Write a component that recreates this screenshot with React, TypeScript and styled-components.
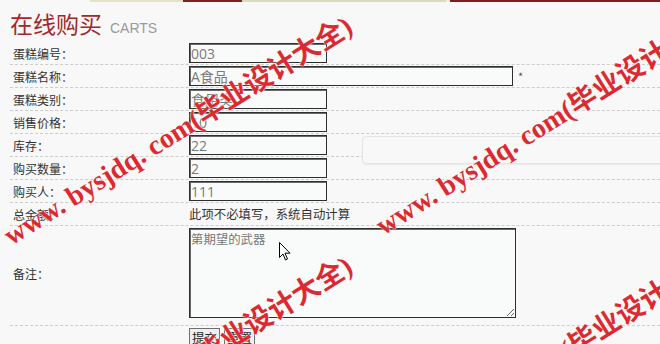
import styled, { createGlobalStyle } from 'styled-components';

const GlobalStyle = createGlobalStyle`
  html, body {
    margin: 0;
    padding: 0;
    background: #f8f8f8;
  }
  body {
    font-family: "Noto Sans CJK SC", "Noto Sans", sans-serif;
    color: #333;
  }
`;

const Page = styled.div`
  position: relative;
  width: 660px;
  height: 344px;
  overflow: hidden;
  background: #f8f8f8;
`;

const TopStrip = styled.div`
  height: 2px;
  background: linear-gradient(
    to right,
    transparent 0 90px,
    #e6e2c6 90px 183px,
    #7a2224 183px 242px,
    #dcdcb8 242px 446px,
    #f0eee0 446px 450px,
    #7a1f22 450px 660px
  );
`;

const Header = styled.div`
  display: flex;
  align-items: baseline;
  gap: 8px;
  padding: 7px 0 0 10px;
  height: 33px;
`;

const Title = styled.h1`
  margin: 0;
  font-size: 23px;
  font-weight: normal;
  color: #a3282b;
  line-height: 28px;
`;

const SubTitle = styled.span`
  font-family: "Liberation Sans", Arial, sans-serif;
  font-size: 14px;
  color: #9a9a9a;
`;

const Form = styled.form`
  margin: 0 0 0 10px;
`;

const Row = styled.div<{ $pad?: string; $last?: boolean }>`
  display: grid;
  grid-template-columns: 179px 1fr;
  align-items: center;
  padding: ${(p) => p.$pad || '1px 0'};
  min-height: 20px;
  border-bottom: ${(p) => (p.$last ? 'none' : '1px dashed #cdcdcd')};
`;

const Label = styled.label`
  padding-left: 3px;
  font-size: 12px;
  color: #333;
`;

const Field = styled.div`
  display: flex;
  align-items: center;
  gap: 5px;
`;

const Input = styled.input<{ $w: number }>`
  box-sizing: border-box;
  width: ${(p) => p.$w}px;
  height: 20px;
  margin: 0;
  padding: 0 1px;
  border: 1px solid #2e2e2e;
  box-shadow: inset 1px 1px 0 #6a6a6a;
  background: #f9fbfb;
  font-family: "Open Sans", "Noto Sans CJK SC", sans-serif;
  font-size: 14px;
  color: #7a7a7a;
  outline: none;
`;

const Star = styled.span`
  font-size: 11px;
  color: #555;
`;

const Note = styled.span`
  font-size: 12.4px;
  color: #333;
`;

const TextArea = styled.textarea`
  box-sizing: border-box;
  width: 327px;
  height: 90px;
  margin: 0;
  padding: 1px 1px;
  border: 1px solid #2e2e2e;
  box-shadow: inset 1px 1px 0 #6a6a6a;
  background: #f9fbfb;
  font-family: "Noto Sans CJK SC", sans-serif;
  font-size: 12.4px;
  color: #777;
  resize: both;
  outline: none;
  display: block;
`;

const Buttons = styled.div`
  display: flex;
  gap: 4px;
`;

const Button = styled.button`
  height: 19px;
  padding: 0 2px;
  border: 1px solid #6f6f6f;
  background: #efefef;
  font-family: "Noto Sans CJK SC", sans-serif;
  font-size: 12.5px;
  line-height: 17px;
  color: #222;
`;

const GhostPanel = styled.div`
  position: absolute;
  left: 362px;
  top: 136px;
  width: 320px;
  height: 26px;
  border: 1px solid #e4e4e4;
  border-radius: 4px;
  background: #f8f8f8;
  box-shadow: 0 1px 2px rgba(0, 0, 0, 0.06);
`;

const Mark = styled.div<{ $x: number; $y: number }>`
  position: absolute;
  left: ${(p) => p.$x}px;
  top: ${(p) => p.$y - 28}px;
  transform-origin: 0 100%;
  transform: rotate(-32deg);
  white-space: pre;
  line-height: 28px;
  font-family: "Liberation Serif", "Noto Sans CJK SC", serif;
  font-weight: bold;
  font-size: 28px;
  color: #dc2a30;
  text-shadow: 0 0 2px #fff, 0 0 1px #fff;
  pointer-events: none;
`;

const Cursor = styled.svg`
  position: absolute;
  left: 279px;
  top: 242px;
`;

const marks = [
  { x: 14, y: 250 },
  { x: 386, y: 240 },
  { x: 14, y: 490 },
  { x: 386, y: 480 },
];

export default function App() {
  return (
    <Page>
      <GlobalStyle />
      <TopStrip />
      <Header>
        <Title>在线购买</Title>
        <SubTitle>CARTS</SubTitle>
      </Header>
      <Form onSubmit={(e) => e.preventDefault()}>
        <Row>
          <Label>蛋糕编号：</Label>
          <Field>
            <Input $w={138} defaultValue="003" readOnly />
          </Field>
        </Row>
        <Row>
          <Label>蛋糕名称：</Label>
          <Field>
            <Input $w={324} defaultValue="A食品" />
            <Star>*</Star>
          </Field>
        </Row>
        <Row>
          <Label>蛋糕类别：</Label>
          <Field>
            <Input $w={138} defaultValue="食用类" />
          </Field>
        </Row>
        <Row>
          <Label>销售价格：</Label>
          <Field>
            <Input $w={138} defaultValue="10" />
          </Field>
        </Row>
        <Row>
          <Label>库存：</Label>
          <Field>
            <Input $w={138} defaultValue="22" />
          </Field>
        </Row>
        <Row>
          <Label>购买数量：</Label>
          <Field>
            <Input $w={138} defaultValue="2" />
          </Field>
        </Row>
        <Row>
          <Label>购买人：</Label>
          <Field>
            <Input $w={138} defaultValue="111" />
          </Field>
        </Row>
        <Row>
          <Label>总金额：</Label>
          <Note>此项不必填写，系统自动计算</Note>
        </Row>
        <Row $pad="2px 0 7px">
          <Label>备注：</Label>
          <TextArea defaultValue="第期望的武器" />
        </Row>
        <Row $last>
          <span />
          <Buttons>
            <Button type="submit">提交</Button>
            <Button type="reset">重置</Button>
          </Buttons>
        </Row>
      </Form>
      <GhostPanel />
      {marks.map((m, i) => (
        <Mark key={i} $x={m.x} $y={m.y}>
          {'www. bysjdq. com(毕业设计大全)'}
        </Mark>
      ))}
      <Cursor width="12" height="19" viewBox="0 0 12 19">
        <path
          d="M0.5 0.5 L0.5 15.5 L4 12 L6.5 18 L8.5 17 L6 11.2 L11 11.2 Z"
          fill="#fff"
          stroke="#000"
          strokeWidth="1"
          strokeLinejoin="round"
        />
      </Cursor>
    </Page>
  );
}
